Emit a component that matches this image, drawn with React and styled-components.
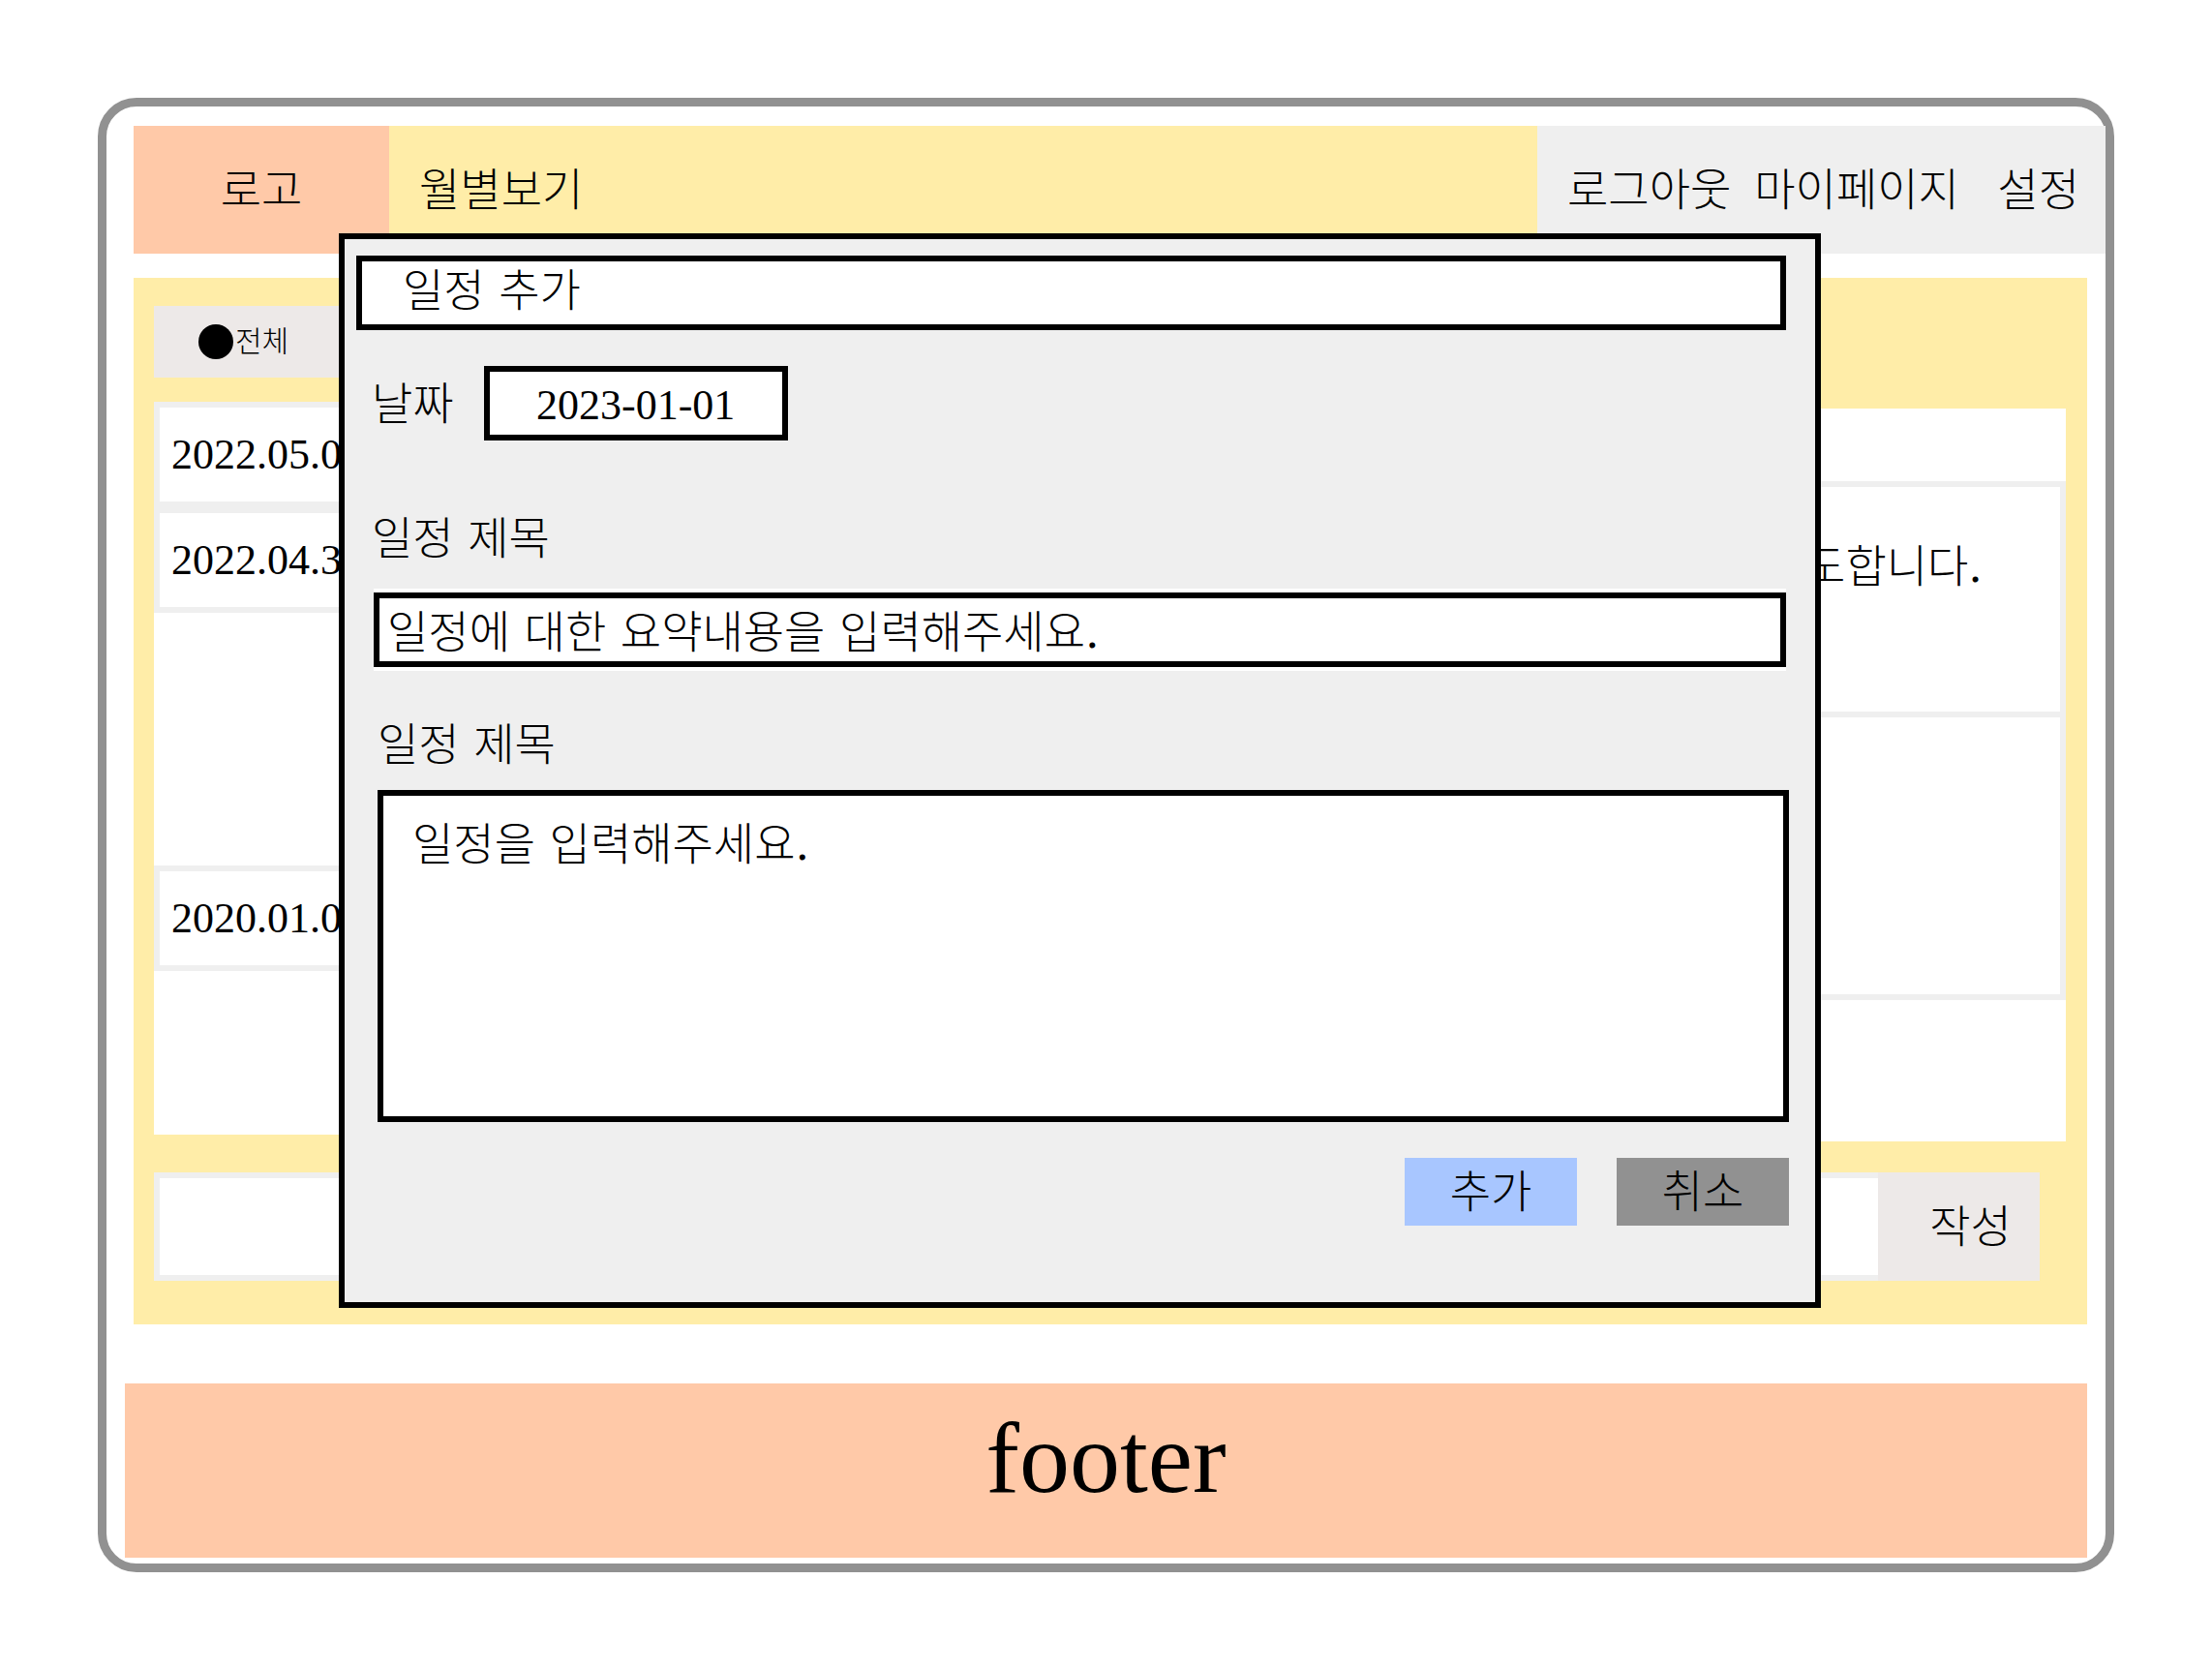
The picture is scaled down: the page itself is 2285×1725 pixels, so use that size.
import React from "react";
import styled, { createGlobalStyle } from "styled-components";

const color = {
  ink: "#000000",
  line: "#919191",
  peach: "#ffc9a8",
  yellow: "#ffeda8",
  panel: "#efefef",
  warm: "#ede9e8",
  blue: "#a8c6ff",
  white: "#ffffff",
};

const latin = `"Liberation Serif", "Noto Sans CJK KR", serif`;
const korean = `"DejaVu Serif", "Noto Sans CJK KR", serif`;

const GlobalStyle = createGlobalStyle`
  *, *::before, *::after { box-sizing: border-box; }
  body {
    margin: 0;
    background: ${color.white};
    color: ${color.ink};
  }
  body, button, input, textarea {
    font-family: ${korean};
    font-size: 46px;
    font-weight: 300;
    line-height: 60px;
  }
  ul { margin: 0; padding: 0; list-style: none; }
  input::placeholder, textarea::placeholder { color: ${color.ink}; opacity: 1; }
`;

const Page = styled.div`
  padding: 101px 101px 100px;
`;

const Frame = styled.div`
  position: relative;
  padding: 20px 0 6px;
  border: 9px solid ${color.line};
  border-radius: 40px;
`;

const Header = styled.header`
  display: flex;
  height: 132px;
  margin-left: 28px;
  background: ${color.yellow};
`;

const NavLink = styled.a`
  color: inherit;
  text-decoration: none;
  white-space: nowrap;
`;

const Logo = styled(NavLink)`
  display: flex;
  flex: 0 0 264px;
  align-items: center;
  justify-content: center;
  background: ${color.peach};
`;

const MainNav = styled.nav`
  display: flex;
  flex: 1;
  align-items: center;
  padding-left: 31px;
`;

const UserNav = styled.nav`
  display: flex;
  flex: 0 0 587px;
  align-items: center;
  gap: 24px;
  padding: 0 27px 0 31px;
  background: ${color.panel};
`;

const LastLink = styled(NavLink)`
  margin-left: auto;
`;

const Main = styled.main`
  margin: 25px 19px 0 28px;
  padding: 29px 22px 45px 21px;
  background: ${color.yellow};
`;

const FilterBar = styled.div`
  display: flex;
  align-items: center;
  width: 35%;
  height: 74px;
  padding-left: 46px;
  background: ${color.warm};
`;

const FilterOption = styled.label`
  display: flex;
  align-items: center;
  gap: 2px;
  font-size: 30px;
`;

const Radio = styled.input`
  appearance: none;
  width: 36px;
  height: 36px;
  margin: 0;
  border-radius: 50%;
  background: ${color.ink};
`;

const Board = styled.div`
  display: grid;
  grid-template-columns: 35% 1fr;
  gap: 24px;
  margin-top: 25px;
`;

const DateColumn = styled.div`
  display: flex;
  flex-direction: column;
  justify-content: space-between;
  height: 757px;
  padding-bottom: 169px;
  background: ${color.white};
`;

const DateRow = styled.li`
  display: flex;
  align-items: center;
  height: 109px;
  padding-left: 12px;
  border: 6px solid ${color.panel};
  font-family: ${latin};
  font-size: 44px;
`;

const DetailColumn = styled.section`
  height: 757px;
  margin-top: 7px;
  padding-top: 75px;
  background: ${color.white};
`;

const Detail = styled.article`
  height: ${(p) => p.$height}px;
  padding: 52px 80px 0 24px;
  border: 6px solid ${color.panel};
  text-align: right;

  & + & { border-top: 0; }
`;

const WriteForm = styled.form`
  display: flex;
  height: 112px;
  margin: 32px 27px 0 0;
`;

const WriteInput = styled.input`
  flex: 1;
  min-width: 0;
  padding: 0 12px;
  border: 6px solid ${color.panel};
  border-right: 0;
  border-radius: 0;
  background: ${color.white};
  outline: none;
`;

const Button = styled.button`
  width: 178px;
  height: 70px;
  padding: 0;
  border: 0;
  background: ${(p) => p.$fill};
  color: ${color.ink};
`;

const WriteButton = styled(Button)`
  width: 167px;
  height: auto;
  padding-left: 24px;
`;

const Footer = styled.footer`
  display: flex;
  justify-content: center;
  height: 180px;
  margin: 61px 19px 0;
  padding-top: 25px;
  background: ${color.peach};
  font-family: ${latin};
  font-size: 104px;
  line-height: 104px;
`;

const Modal = styled.section`
  position: absolute;
  top: 131px;
  right: 294px;
  left: 240px;
  padding: 17px 0 79px;
  border: 6px solid ${color.ink};
  background: ${color.panel};
`;

const ModalTitle = styled.h2`
  height: 77px;
  margin: 0 30px 0 12px;
  padding: 0 42px;
  border: 6px solid ${color.ink};
  background: ${color.white};
  font-size: 46px;
  font-weight: 300;
`;

const Section = styled.div`
  display: flex;
  flex-direction: column;
  padding: 0 30px 0 28px;
`;

const WideSection = styled(Section)`
  padding: 0 27px 0 34px;
`;

const DateField = styled.div`
  display: flex;
  align-items: center;
  gap: 31px;
  margin: 37px 0 71px;
`;

const Field = styled.input`
  height: 77px;
  padding: 4px 8px 0;
  border: 6px solid ${color.ink};
  border-radius: 0;
  background: ${color.white};
  color: ${color.ink};
  outline: none;
`;

const DateInput = styled(Field)`
  width: 314px;
  font-family: ${latin};
  font-size: 44px;
  text-align: center;
`;

const SummaryInput = styled(Field)`
  margin: 26px 0 50px 2px;
  box-shadow: 0 -4px ${color.white}, 0 4px ${color.white};
`;

const BodyInput = styled.textarea`
  height: 343px;
  margin: 17px 0 37px;
  padding: 20px 30px;
  border: 6px solid ${color.ink};
  border-radius: 0;
  background: ${color.white};
  color: ${color.ink};
  outline: none;
  resize: none;
`;

const Actions = styled.div`
  display: flex;
  justify-content: flex-end;
  gap: 41px;
`;

const recentDates = ["2022.05.01", "2022.04.30"];
const olderDates = ["2020.01.01"];

function DateList({ dates }) {
  return (
    <ul>
      {dates.map((date) => (
        <DateRow key={date}>{date}</DateRow>
      ))}
    </ul>
  );
}

function ScheduleModal() {
  return (
    <Modal role="dialog" aria-labelledby="modal-title">
      <ModalTitle id="modal-title">일정 추가</ModalTitle>
      <form onSubmit={(e) => e.preventDefault()}>
        <Section>
          <DateField>
            <label htmlFor="date">날짜</label>
            <DateInput id="date" type="text" defaultValue="2023-01-01" />
          </DateField>
          <label htmlFor="summary">일정 제목</label>
          <SummaryInput
            id="summary"
            type="text"
            placeholder="일정에 대한 요약내용을 입력해주세요."
          />
        </Section>
        <WideSection>
          <label htmlFor="content">일정 제목</label>
          <BodyInput id="content" placeholder="일정을 입력해주세요." />
          <Actions>
            <Button type="submit" $fill={color.blue}>추가</Button>
            <Button type="button" $fill={color.line}>취소</Button>
          </Actions>
        </WideSection>
      </form>
    </Modal>
  );
}

export default function App() {
  return (
    <>
      <GlobalStyle />
      <Page>
        <Frame>
          <Header>
            <Logo href="#home">로고</Logo>
            <MainNav>
              <NavLink href="#monthly">월별보기</NavLink>
            </MainNav>
            <UserNav>
              <NavLink href="#logout">로그아웃</NavLink>
              <NavLink href="#mypage">마이페이지</NavLink>
              <LastLink href="#settings">설정</LastLink>
            </UserNav>
          </Header>
          <Main>
            <FilterBar>
              <FilterOption>
                <Radio type="radio" name="filter" defaultChecked />
                전체
              </FilterOption>
            </FilterBar>
            <Board>
              <DateColumn>
                <DateList dates={recentDates} />
                <DateList dates={olderDates} />
              </DateColumn>
              <DetailColumn>
                <Detail $height={244}>도합니다.</Detail>
                <Detail $height={292} />
              </DetailColumn>
            </Board>
            <WriteForm onSubmit={(e) => e.preventDefault()}>
              <WriteInput type="text" aria-label="작성" />
              <WriteButton type="submit" $fill={color.warm}>작성</WriteButton>
            </WriteForm>
          </Main>
          <Footer>footer</Footer>
          <ScheduleModal />
        </Frame>
      </Page>
    </>
  );
}
